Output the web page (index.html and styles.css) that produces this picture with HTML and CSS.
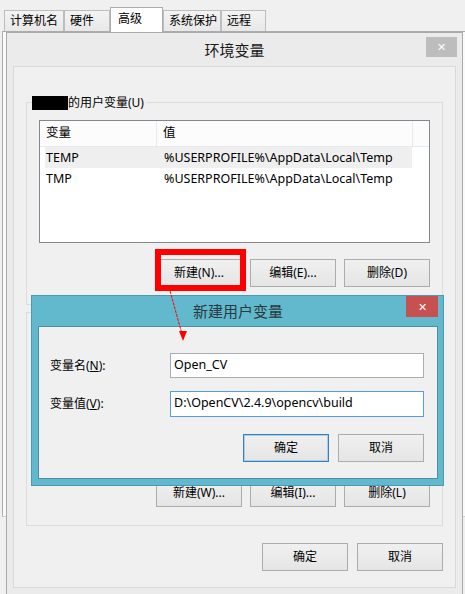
FILE: index.html
```html
<!DOCTYPE html>
<html lang="zh">
<head>
    <meta charset="UTF-8">
    <title>环境变量</title>
    <link rel="stylesheet" href="styles.css">
</head>
<body>
    <div class="tabs">
        <div class="tab t1">计算机名</div>
        <div class="tab t2">硬件</div>
        <div class="tab t3 active">高级</div>
        <div class="tab t4">系统保护</div>
        <div class="tab t5">远程</div>
    </div>
    <div class="sheet"></div>

    <!-- 环境变量 -->
    <div class="win env">
        <div class="titlebar">
            <span class="title">环境变量</span>
            <span class="close gray">&#x2715;</span>
        </div>
        <div class="client">
            <div class="group g1">
                <div class="legend"><span class="mask"></span>的用户变量(U)</div>
                <div class="list">
                    <div class="lhead">
                        <div class="c1">变量</div>
                        <div class="c2">值</div>
                        <div class="c3"></div>
                    </div>
                    <div class="lrow sel">
                        <div class="c1">TEMP</div>
                        <div class="c2">%USERPROFILE%\AppData\Local\Temp</div>
                    </div>
                    <div class="lrow">
                        <div class="c1">TMP</div>
                        <div class="c2">%USERPROFILE%\AppData\Local\Temp</div>
                    </div>
                </div>
                <div class="btns">
                    <button class="btn">新建(N)...</button>
                    <button class="btn">编辑(E)...</button>
                    <button class="btn">删除(D)</button>
                </div>
            </div>
            <div class="group g2">
                <div class="legend">系统变量(S)</div>
                <div class="list tall"></div>
                <div class="btns">
                    <button class="btn">新建(W)...</button>
                    <button class="btn">编辑(I)...</button>
                    <button class="btn">删除(L)</button>
                </div>
            </div>
            <div class="btns foot">
                <button class="btn">确定</button>
                <button class="btn">取消</button>
            </div>
        </div>
    </div>

    <!-- 标注 -->
    <div class="mark"></div>

    <!-- 新建用户变量 -->
    <div class="win dlg">
        <div class="titlebar small">
            <span class="title">新建用户变量</span>
            <span class="close red">&#x2715;</span>
        </div>
        <div class="client">
            <div class="field">
                <label>变量名(<u>N</u>):</label>
                <div class="input">Open_CV</div>
            </div>
            <div class="field">
                <label>变量值(<u>V</u>):</label>
                <div class="input focus">D:\OpenCV\2.4.9\opencv\build</div>
            </div>
            <div class="btns dfoot">
                <button class="btn def">确定</button>
                <button class="btn">取消</button>
            </div>
        </div>
    </div>

    <svg class="arrow" width="465" height="594" viewBox="0 0 465 594">
        <line x1="170" y1="291" x2="182" y2="334" stroke="#ff0000" stroke-width="1" stroke-dasharray="3 1"/>
        <polygon points="183,341 179,331 187,331" fill="#ff0000"/>
    </svg>
</body>
</html>
```

FILE: styles.css
```css
body { margin: 0; width: 465px; height: 594px; overflow: hidden; position: relative; background: #f0f0f0; color: #000; font: 12px/16px "Noto Sans", "Noto Sans CJK SC", sans-serif; }

.tabs { display: flex; align-items: flex-end; height: 31px; padding-left: 4px; position: relative; z-index: 1; }
.tab { box-sizing: border-box; height: 21px; border: 1px solid #bdbdbd; border-bottom: none; background: linear-gradient(#f3f3f3, #e8e8e8); padding-left: 5px; line-height: 20px; }
.t1 { width: 60px; }
.t2 { width: 46px; }
.t3 { width: 53px; }
.t4 { width: 58px; }
.t5 { width: 45px; }
.tab.active { height: 25px; margin-bottom: -1px; background: #fff; border-color: #acacac; padding-left: 7px; line-height: 22px; }

.sheet { margin-left: 2px; height: 484px; border-left: 1px solid #acacac; border-top: 1px solid #acacac; border-bottom: 1px solid #d0d0d0; background: #fafafa; }

.win { position: absolute; box-sizing: border-box; }
.env { left: 6px; top: 32px; width: 457px; height: 570px; border: 1px solid #a9a9a9; background: #ebebeb; padding: 0 6px; }
.titlebar { position: relative; height: 33px; display: flex; align-items: center; justify-content: center; }
.title { font-size: 15px; line-height: 20px; color: #1a1a1a; }
.close { position: absolute; top: 4px; right: -1px; width: 31px; height: 20px; display: flex; align-items: center; justify-content: center; color: #fff; font-size: 11px; }
.close.gray { background: #bdbdbd; }

.client { border: 1px solid #d9d9d9; background: #f0f0f0; padding: 35px 12px 16px; }

.group { position: relative; border: 1px solid #dcdcdc; padding: 17px 12px 17px; }
.g2 { margin-top: 7px; padding-bottom: 18px; }
.legend { position: absolute; top: -8px; left: 5px; display: flex; align-items: center; background: #f0f0f0; padding-right: 2px; }
.mask { width: 36px; height: 14px; background: #000; }

.list { height: 123px; box-sizing: border-box; border: 1px solid #828790; background: #fff; font-size: 12.5px; }
.list.tall { height: 133px; }
.lhead { display: flex; height: 25px; border-bottom: 1px solid #e5eaf1; background: #fcfcfd; line-height: 24px; }
.lhead .c1 { width: 117px; padding-left: 6px; box-sizing: border-box; border-right: 1px solid #e5eaf1; }
.lhead .c2 { width: 256px; padding-left: 6px; box-sizing: border-box; border-right: 1px solid #e5eaf1; }
.lrow { display: flex; width: 367px; height: 21px; margin-left: 5px; line-height: 21px; }
.lrow.sel { background: #efefef; }
.lrow .c1 { width: 112px; padding-left: 1px; box-sizing: border-box; }
.lrow .c2 { padding-left: 7px; }

.btns { display: flex; justify-content: flex-end; gap: 8px; margin-top: 16px; }
.foot { margin-top: 17px; gap: 9px; }
.btn { box-sizing: border-box; width: 86px; height: 28px; margin: 0; padding: 0; border: 1px solid #acacac; background: linear-gradient(#f0f0f0, #e5e5e5); font: inherit; color: #000; }
.btn.def { border-color: #3c7fb1; box-shadow: inset 0 0 0 1px #a7cdef; }

.mark { position: absolute; left: 155px; top: 249px; width: 91px; height: 42px; box-sizing: border-box; border: 6px solid #ff0000; }

.dlg { left: 31px; top: 295px; width: 413px; height: 191px; border: 1px solid #4a9bb0; background: #62b8cc; padding: 0 5px 6px 6px; }
.titlebar.small { height: 30px; }
.dlg .title { color: #2a3a40; }
.close.red { top: 0; right: 0; width: 32px; height: 21px; background: #c75050; }
.dlg .client { height: 153px; box-sizing: border-box; border-color: #4b91a3; padding: 26px 13px 0 11px; }
.field { display: flex; align-items: center; height: 25px; }
.field + .field { margin-top: 13px; height: 26px; }
.field label { width: 120px; }
.input { box-sizing: border-box; width: 254px; height: 100%; border: 1px solid #abadb3; background: #fff; padding-left: 3px; line-height: 22px; font-size: 12.5px; }
.input.focus { border-color: #569de5; }
.dfoot { margin-top: 17px; gap: 9px; }

.arrow { position: absolute; left: 0; top: 0; pointer-events: none; }
```
